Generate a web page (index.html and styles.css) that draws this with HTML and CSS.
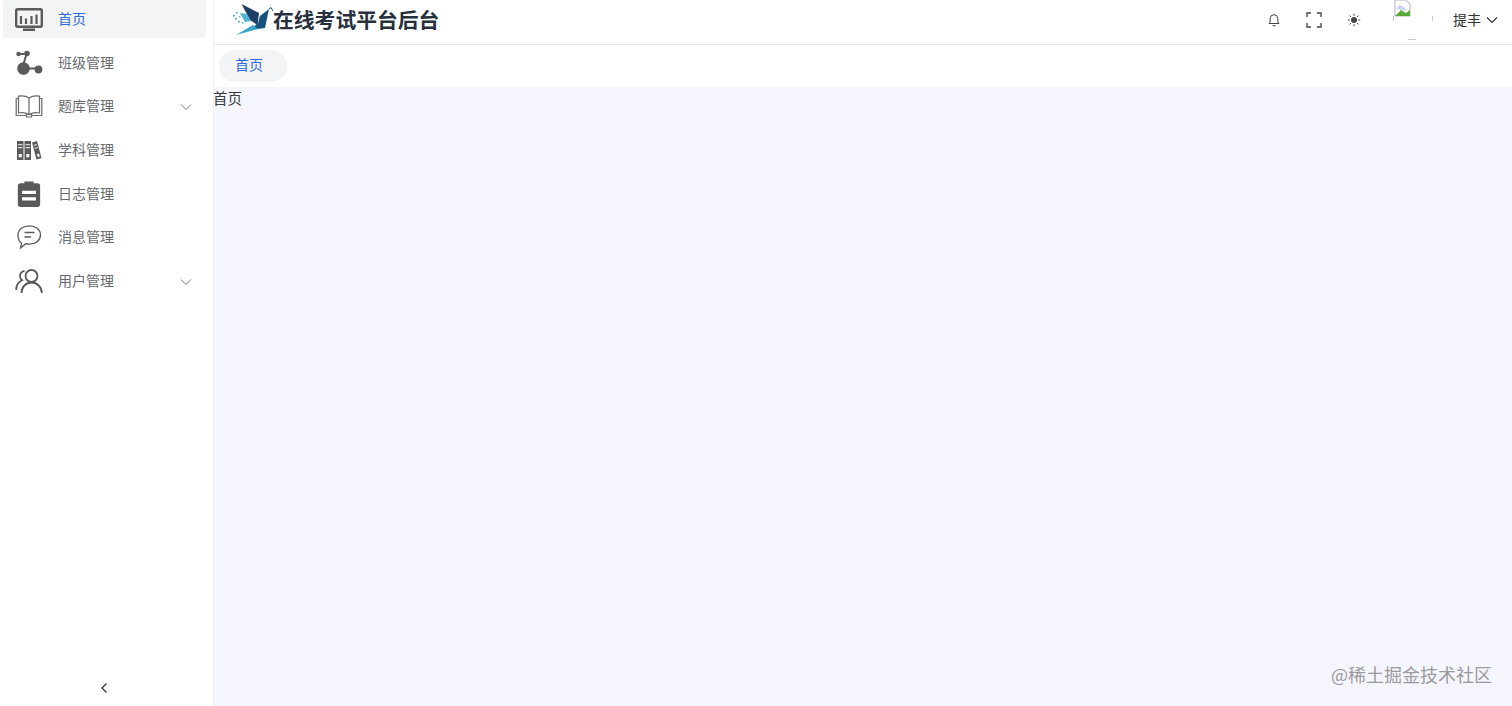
FILE: index.html
```html
<!DOCTYPE html>
<html lang="zh-CN">
<head>
  <meta charset="UTF-8" />
  <title>在线考试平台后台</title>
  <link rel="stylesheet" href="styles.css">
</head>
<body>
  <aside class="sidebar">
    <nav class="menu">
      <a class="menu-item active">
        <svg class="menu-icon icon-chart" viewBox="0 0 28 24" fill="none" stroke="#5a5a5a">
          <rect x="1.200" y="1.200" width="25.600" height="17.600" rx="1.500" stroke-width="2.400"/>
          <path d="M6 8v8M11 10.500v5.500M16.500 8v8M21.500 6.500v9.500" stroke-width="2.200"/>
          <path d="M8 20.500h12v2.500h-12z" fill="#5a5a5a" stroke="none"/>
        </svg>
        <span>首页</span>
      </a>
      <a class="menu-item">
        <svg class="menu-icon" viewBox="0 0 28 26" fill="#5a5a5a" stroke="#5a5a5a">
          <circle cx="3.500" cy="4" r="2.200" stroke="none"/>
          <circle cx="12" cy="3.500" r="2.800" stroke="none"/>
          <circle cx="8.500" cy="18.500" r="6.300" stroke="none"/>
          <circle cx="23.500" cy="19.500" r="3.900" stroke="none"/>
          <path d="M4 4h7M11.500 4L8.500 14M13 18.500h8" stroke-width="2" fill="none"/>
        </svg>
        <span>班级管理</span>
      </a>
      <a class="menu-item">
        <svg class="menu-icon" viewBox="0 0 28 24" fill="none" stroke="#6a6a6a" stroke-width="1.200">
          <path d="M14 4C11 1.800 7 1.500 3.500 2.200V19C7 18.300 11 18.600 14 20.500C17 18.600 21 18.300 24.500 19V2.200C21 1.500 17 1.800 14 4zM14 4V20.500"/>
          <path d="M3.500 4.500H1.200V21.500H11.500M24.500 4.500H26.800V21.500H16.500M11.500 20.500h5v2.500h-5z"/>
        </svg>
        <span>题库管理</span>
        <svg class="menu-arrow" viewBox="0 0 12 8" fill="none" stroke="#777" stroke-width="1"><path d="M1 1.500L6 6.500L11 1.500"/></svg>
      </a>
      <a class="menu-item">
        <svg class="menu-icon" viewBox="0 0 28 24" fill="#5a5a5a">
          <path d="M2 3h6.500v19H2zM9.500 3H16v19H9.500z"/>
          <path d="M17 4.500l5-1.500 4.500 17-5 1.500z"/>
          <path d="M3 6h4.500v1.200H3zM10.500 6H15v1.200h-4.500zM3 9h4.500v1.200H3zM10.500 9H15v1.200h-4.500zM18.800 6.800l3-.9.300 1.200-3 .9zM19.600 9.800l3-.9.300 1.200-3 .9z" fill="#d8d8d8"/>
          <path d="M3.800 16h3v3.200h-3zM11.300 16h3v3.200h-3zM22 16l2-.6.800 3-2 .6z" fill="#fff"/>
        </svg>
        <span>学科管理</span>
      </a>
      <a class="menu-item">
        <svg class="menu-icon" viewBox="0 0 28 28" fill="#5a5a5a">
          <path d="M9 0.500h10v2h4a3 3 0 0 1 3 3v19.500a3 3 0 0 1-3 3H5a3 3 0 0 1-3-3V5.500a3 3 0 0 1 3-3h4z"/>
          <path d="M6.500 10.500h15v3.600h-15zM6.500 17.500h15v3.600h-15z" fill="#fff"/>
        </svg>
        <span>日志管理</span>
      </a>
      <a class="menu-item">
        <svg class="menu-icon" viewBox="0 0 28 26" fill="none" stroke="#5a5a5a" stroke-width="1.300">
          <path d="M14.500 1.800c6 0 11 3.700 11 9.200s-5 9.200-11 9.200c-1.300 0-2.600-.2-3.800-.5L5.500 24l1-4.700C4 17.500 3 14.500 3 11c0-5.500 5.500-9.200 11.500-9.200z"/>
          <path d="M9.500 8.500h10M9.500 13h6.500"/>
        </svg>
        <span>消息管理</span>
      </a>
      <a class="menu-item">
        <svg class="menu-icon" viewBox="0 0 28 26" fill="none" stroke="#5a5a5a" stroke-width="1.800">
          <circle cx="16.500" cy="8" r="6"/>
          <path d="M6.500 25c0-6 4.500-10.500 10-10.500S26.800 19 26.800 25"/>
          <path d="M9.500 2.800C6.500 3.500 5 5.800 5 8c0 1.800.8 3.300 2 4.300C3.500 14 1.200 17.500 1.200 22"/>
        </svg>
        <span>用户管理</span>
        <svg class="menu-arrow" viewBox="0 0 12 8" fill="none" stroke="#777" stroke-width="1"><path d="M1 1.500L6 6.500L11 1.500"/></svg>
      </a>
    </nav>
    <div class="collapse">
      <svg viewBox="0 0 8 12" fill="none" stroke="#333" stroke-width="1.300"><path d="M6.500 1.500L2 6L6.500 10.500"/></svg>
    </div>
  </aside>

  <div class="page">
    <header class="topbar">
      <div class="brand">
        <svg class="brand-logo" viewBox="0 0 40 34">
          <path d="M8.500 1L26 10L24.500 22L17 17z" fill="#1d3f66"/>
          <path d="M36 6L32 25L17 27L25 20L27 13z" fill="#17527c"/>
          <path d="M3 32L20 22L25 26z" fill="#3aa5cb"/>
          <path d="M36 6L38 4.500L40 8" fill="none" stroke="#17527c" stroke-width="1"/>
          <path d="M7 10l7 1 4 7-6 1z" fill="#4fb3d3"/>
          <path d="M0 12h2v1.500H0zM3 9h2v1.500H3zM2 15h2v1.500H2zM5 18h2v1.500H5zM6 13h1.500v1.500H6zM9 19h1.500v1.500H9z" fill="#4fb3d3"/>
        </svg>
        <span class="brand-name">在线考试平台后台</span>
      </div>
      <div class="tools">
        <svg class="tool" viewBox="0 0 14 14" fill="none" stroke="#444" stroke-width="1"><path d="M2 10.500h10L10.800 9V5.500a3.800 3.800 0 0 0-7.600 0V9zM5.500 12.700h3"/></svg>
        <svg class="tool" viewBox="0 0 16 16" fill="none" stroke="#444" stroke-width="1.300"><path d="M1 5V1h4M11 1h4v4M15 11v4h-4M5 15H1v-4"/></svg>
        <svg class="tool" viewBox="0 0 14 14" fill="#444"><circle cx="7" cy="7" r="3"/><path d="M7 .8v2M7 11.200v2M.8 7h2M11.200 7h2M2.600 2.600l1.400 1.400M10 10l1.400 1.400M2.600 11.400L4 10M10 4l1.400-1.400" stroke="#444" stroke-width="1"/></svg>
        <div class="avatar">
          <svg viewBox="0 0 40 40" fill="none">
            <path d="M2 0h11l4 4v12H2z" fill="#fff" stroke="#b5b5b5"/>
            <path d="M2 16l6-6 5 3 4-3v6z" fill="#5aa83a"/>
            <path d="M3 9l3-4 5 2 3 4z" fill="#c6d8f0"/>
            <path d="M0.500 16v5M39.500 16v5M15 39.500h8" stroke="#ccc"/>
          </svg>
        </div>
        <div class="user">
          <span>提丰</span>
          <svg viewBox="0 0 12 8" fill="none" stroke="#333" stroke-width="1.200"><path d="M1 1.500L6 6.500L11 1.500"/></svg>
        </div>
      </div>
    </header>
    <div class="tabs">
      <span class="tab">首页</span>
    </div>
    <main class="content">
      <div class="content-text">首页</div>
      <div class="watermark">@稀土掘金技术社区</div>
    </main>
  </div>
</body>
</html>
```

FILE: styles.css
```css
* {
  box-sizing: border-box;
  margin: 0;
  padding: 0;
}

html, body {
  width: 100%;
  height: 100%;
  overflow: hidden;
}

body {
  display: flex;
  font-family: "Noto Sans CJK SC", "Noto Sans", sans-serif;
  font-size: 14px;
  color: #303133;
  background: #fff;
}

.sidebar {
  width: 214px;
  flex-shrink: 0;
  display: flex;
  flex-direction: column;
  border-right: 1px solid #eef0f6;
  padding: 0 7px 0 3px;
}

.menu {
  flex: 1;
  display: flex;
  flex-direction: column;
  gap: 5.67px;
}

.menu-item {
  display: flex;
  align-items: center;
  height: 38px;
  padding-left: 12px;
  color: #666970;
  border-radius: 2px;
}

.menu-item span {
  margin-top: -2px;
}

.menu-item.active {
  background: #f3f4f5;
  color: #2f6bdc;
}

.menu-icon {
  width: 28px;
  height: 26px;
  margin-right: 15px;
  flex-shrink: 0;
}

.icon-chart {
  margin-top: 2px;
}

.menu-arrow {
  width: 12px;
  height: 8px;
  margin-left: auto;
  margin-right: 14px;
  margin-top: 2px;
}

.collapse {
  height: 36px;
  display: flex;
  align-items: center;
  justify-content: center;
  padding-right: 2px;
}

.collapse svg {
  width: 8px;
  height: 12px;
}

.page {
  flex: 1;
  display: flex;
  flex-direction: column;
  min-width: 0;
}

.topbar {
  height: 45px;
  flex-shrink: 0;
  display: flex;
  align-items: flex-start;
  justify-content: space-between;
  padding: 0 14px 0 19px;
  border-bottom: 1px solid #e2e3e5;
}

.brand {
  height: 40px;
  display: flex;
  align-items: center;
}

.brand-logo {
  width: 40px;
  height: 34px;
}

.brand-name {
  font-size: 20.800px;
  font-weight: 700;
  color: #26303c;
  margin-top: -3px;
}

.tools {
  height: 40px;
  display: flex;
  align-items: center;
}

.tool {
  width: 14px;
  height: 14px;
  margin-right: 25px;
}

.tool:nth-child(2) {
  width: 16px;
  height: 16px;
}

.tool:nth-child(3) {
  margin-right: 33px;
}

.avatar {
  width: 40px;
  height: 40px;
  margin-right: 20px;
  margin-left: -1px;
}

.avatar svg {
  width: 40px;
  height: 40px;
  display: block;
}

.user {
  display: flex;
  align-items: center;
  gap: 5px;
  color: #303133;
}

.user span {
  margin-top: -2px;
}

.user svg {
  width: 12px;
  height: 8px;
}

.tabs {
  height: 42px;
  flex-shrink: 0;
  display: flex;
  align-items: center;
  padding-left: 5px;
}

.tab {
  width: 68px;
  height: 32px;
  padding-left: 16px;
  line-height: 29px;
  border-radius: 16px;
  background: #f3f4f6;
  color: #2f6bdc;
}

.content {
  flex: 1;
  position: relative;
  background: #f5f6fd;
}

.content-text {
  margin-left: -1px;
  line-height: 22px;
  font-size: 14.500px;
  color: #3a3c40;
}

.watermark {
  position: absolute;
  right: 20px;
  bottom: 20px;
  font-size: 18px;
  line-height: 24px;
  color: #9a9a9e;
}
```
